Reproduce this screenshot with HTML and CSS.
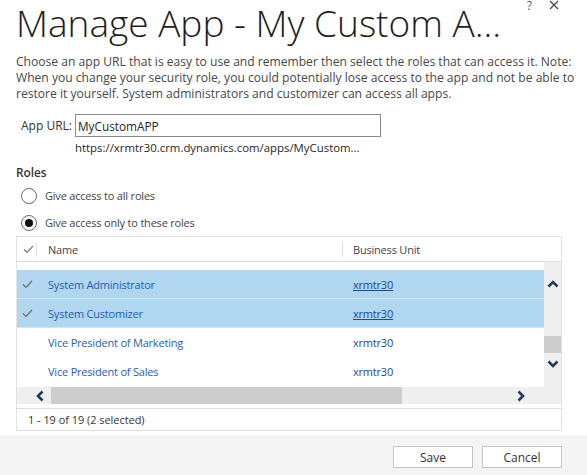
FILE: index.html
```html
<!DOCTYPE html>
<html>
<head>
<meta charset="utf-8">
<link rel="stylesheet" href="styles.css">
</head>
<body>
<div class="dialog">
  <div class="content">
    <div class="titlebar">
      <h1 class="title">Manage App - My Custom A...</h1>
      <div class="controls">
        <span class="help">?</span>
        <svg class="close" width="10" height="10" viewBox="0 0 10 10"><path d="M1 1 L9 9 M9 1 L1 9" stroke="#4a4a4a" stroke-width="1.3" fill="none"/></svg>
      </div>
    </div>
    <p class="desc">Choose an app URL that is easy to use and remember then select the roles that can access it. Note: When you change your security role, you could potentially lose access to the app and not be able to restore it yourself. System administrators and customizer can access all apps.</p>
    <div class="url-row">
      <label class="url-label" for="appurl">App URL:</label>
      <input class="url-input" id="appurl" type="text" value="MyCustomAPP">
    </div>
    <div class="url-full">https://xrmtr30.crm.dynamics.com/apps/MyCustom...</div>
    <div class="roles-label">Roles</div>
    <div class="radio first"><span class="circle"></span><span>Give access to all roles</span></div>
    <div class="radio"><span class="circle on"></span><span>Give access only to these roles</span></div>

    <div class="grid">
      <div class="grid-head">
        <div class="c-check"><svg class="tick" width="11" height="9" viewBox="0 0 11 9"><polyline points="1,4.5 4,7.5 10,1" stroke="#777" stroke-width="1.2" fill="none"/></svg><span class="sep"></span></div>
        <div class="c-name">Name<span class="sep"></span></div>
        <div class="c-bu">Business Unit</div>
      </div>
      <div class="grid-body">
        <div class="viewport">
          <div class="row sel">
            <div class="c-check"><svg class="tick" width="11" height="9" viewBox="0 0 11 9"><polyline points="1,4.5 4,7.5 10,1" stroke="#6b6b6b" stroke-width="1.2" fill="none"/></svg></div>
            <div class="c-name name">System Administrator</div>
            <div class="c-bu bu link">xrmtr30</div>
          </div>
          <div class="row sel">
            <div class="c-check"><svg class="tick" width="11" height="9" viewBox="0 0 11 9"><polyline points="1,4.5 4,7.5 10,1" stroke="#6b6b6b" stroke-width="1.2" fill="none"/></svg></div>
            <div class="c-name name">System Customizer</div>
            <div class="c-bu bu link">xrmtr30</div>
          </div>
          <div class="row">
            <div class="c-check"></div>
            <div class="c-name name">Vice President of Marketing</div>
            <div class="c-bu bu">xrmtr30</div>
          </div>
          <div class="row">
            <div class="c-check"></div>
            <div class="c-name name">Vice President of Sales</div>
            <div class="c-bu bu">xrmtr30</div>
          </div>
        </div>
        <div class="vscroll">
          <svg class="arr up" width="12" height="8" viewBox="0 0 12 8"><polyline points="1.5,6.5 6,2 10.5,6.5" stroke="#203a5c" stroke-width="2.6" fill="none"/></svg>
          <div class="vthumb"></div>
          <svg class="arr down" width="12" height="8" viewBox="0 0 12 8"><polyline points="1.5,1.5 6,6 10.5,1.5" stroke="#203a5c" stroke-width="2.6" fill="none"/></svg>
        </div>
        <div class="hscroll">
          <svg class="harr" width="8" height="12" viewBox="0 0 8 12"><polyline points="6.5,1.5 2,6 6.5,10.5" stroke="#203a5c" stroke-width="2.6" fill="none"/></svg>
          <div class="hthumb"></div>
          <div class="hspace"></div>
          <svg class="harr" width="8" height="12" viewBox="0 0 8 12"><polyline points="1.5,1.5 6,6 1.5,10.5" stroke="#203a5c" stroke-width="2.6" fill="none"/></svg>
        </div>
        <div class="corner"></div>
      </div>
      <div class="grid-foot">1 - 19 of 19 (2 selected)</div>
    </div>
  </div>
  <div class="footer">
    <button class="btn">Save</button>
    <button class="btn">Cancel</button>
  </div>
</div>
</body>
</html>
```
FILE: styles.css
```css
* { box-sizing: border-box; }
body {
  margin: 0;
  font-family: "Segoe UI", "Open Sans", "Noto Sans", sans-serif;
  color: #262626;
  background: #fff;
}
.dialog {
  width: 587px;
  height: 475px;
  display: flex;
  flex-direction: column;
  overflow: hidden;
}
.content {
  flex: 1;
  padding-left: 16px;
}
.titlebar {
  display: flex;
  align-items: flex-start;
}
.title {
  flex: 1;
  margin: 0;
  font-size: 37px;
  font-weight: 300;
  line-height: 46px;
  white-space: nowrap;
  color: #1e1e1e;
}
.controls {
  display: flex;
  align-items: flex-start;
  gap: 17px;
  padding-right: 28px;
  height: 12px;
}
.help {
  font-size: 12px;
  color: #555;
  line-height: 11px;
}
.close { margin-top: 0; }
.desc {
  margin: 8px 0 0 0;
  width: 564px;
  font-size: 12.1px;
  line-height: 16px;
  color: #474747;
}
.url-row {
  display: flex;
  align-items: center;
  margin-top: 12px;
  height: 23px;
}
.url-label {
  width: 59px;
  padding-left: 5px;
  font-size: 12px;
  color: #333;
}
.url-input {
  width: 306px;
  height: 23px;
  border: 1px solid #8a8a8a;
  padding: 0 2px;
  font-family: inherit;
  font-size: 11.8px;
  color: #262626;
  outline: none;
}
.url-full {
  margin: 2px 0 0 59px;
  height: 18px;
  line-height: 18px;
  font-size: 11.4px;
  color: #262626;
}
.roles-label {
  margin-top: 6px;
  height: 18px;
  line-height: 18px;
  font-size: 11.8px;
  font-weight: 600;
  color: #333;
}
.radio {
  display: flex;
  align-items: center;
  gap: 8px;
  height: 27px;
  padding-left: 5px;
  font-size: 11px;
  letter-spacing: -0.2px;
  color: #444;
}
.radio.first { margin-top: 1px; }
.circle {
  width: 16px;
  height: 16px;
  border: 1px solid #6a6a6a;
  border-radius: 50%;
  display: flex;
  align-items: center;
  justify-content: center;
}
.circle.on::after {
  content: "";
  width: 8px;
  height: 8px;
  border-radius: 50%;
  background: #111;
}
.grid {
  width: 546px;
  border: 1px solid #e2e2e2;
}
.grid-head {
  display: flex;
  height: 25px;
  border-bottom: 1px solid #dcdcdc;
  align-items: center;
  font-size: 11px;
  letter-spacing: -0.2px;
  color: #444;
}
.c-check {
  width: 20px;
  flex: none;
  display: flex;
  align-items: center;
  justify-content: space-between;
  padding-left: 6px;
  height: 100%;
}
.c-name {
  width: 306px;
  flex: none;
  padding-left: 11px;
  display: flex;
  align-items: center;
  justify-content: space-between;
  height: 100%;
}
.c-bu {
  flex: 1;
  padding-left: 10px;
  display: flex;
  align-items: center;
  height: 100%;
}
.sep {
  width: 1px;
  height: 15px;
  background: #e0e0e0;
}
.grid-body {
  display: grid;
  grid-template-columns: 527px 17px;
  grid-template-rows: 125px 17px;
}
.viewport {
  padding-top: 8px;
  overflow: hidden;
}
.row {
  display: flex;
  height: 29px;
  align-items: center;
  font-size: 11px;
  letter-spacing: -0.2px;
}
.row.sel {
  background: #b1d6f0;
  border-bottom: 1px solid #cfe3f2;
}
.name { color: #2460b4; }
.bu { color: #234a8c; }
.link { text-decoration: underline; }
.row .c-check { padding-left: 5px; }
.vscroll {
  background: #efefef;
  display: flex;
  flex-direction: column;
  align-items: center;
  padding-top: 18px;
}
.arr { flex: none; }
.vthumb {
  width: 17px;
  height: 17px;
  background: #cdcdcd;
  margin-top: 48px;
}
.arr.down { margin-top: 7px; }
.hscroll {
  background: #efefef;
  display: flex;
  align-items: center;
  padding-left: 19px;
}
.hthumb {
  width: 351px;
  height: 17px;
  background: #cdcdcd;
  margin-left: 7px;
}
.hspace { width: 115px; }
.corner { background: #efefef; }
.grid-foot {
  margin-top: 4px;
  border-top: 1px solid #dedede;
  height: 22px;
  line-height: 21px;
  padding-left: 11px;
  font-size: 10.9px;
  color: #333;
}
.footer {
  flex: none;
  height: 40px;
  background: #f4f4f4;
  display: flex;
  justify-content: flex-end;
  align-items: flex-start;
  gap: 9px;
  padding: 11px 25px 0 0;
}
.btn {
  width: 80px;
  height: 22px;
  background: #fff;
  border: 1px solid #c6c6c6;
  font-family: inherit;
  font-size: 12px;
  color: #333;
  padding: 0;
}
```
